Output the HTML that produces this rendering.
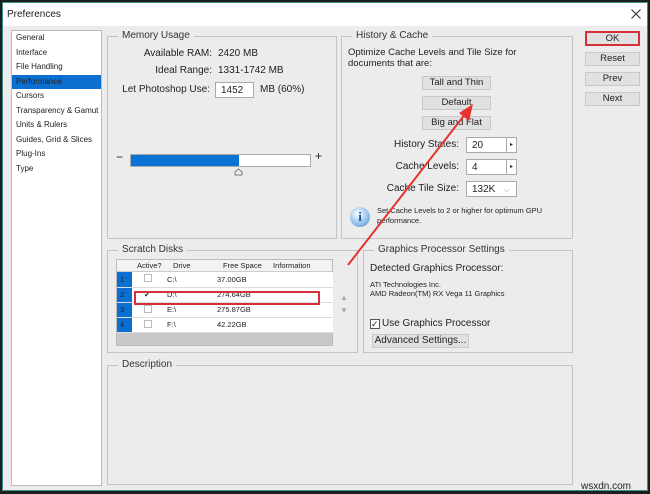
<!DOCTYPE html><html><head><style>
*{margin:0;padding:0;box-sizing:border-box}
body{width:650px;height:494px;background:#1e1e1e;font-family:"Liberation Sans",sans-serif;font-size:9px;color:#222;position:relative;overflow:hidden}
.win{position:absolute;left:2px;top:2px;width:646px;height:489px;background:#ececec;border:1px solid #3a8f86}
.a{position:absolute}
.title{left:0;top:0;width:644px;height:23px;background:#fff}
.grp{position:absolute;border:1px solid #c4c4c4}
.grp>.lg{position:absolute;top:-7px;left:10px;background:#ececec;padding:0 4px;font-size:10px;color:#333}
.btn{position:absolute;background:#e1e1e1;border:1px solid #c8c8c8;text-align:center;font-size:9.5px;line-height:12px}
.inp{position:absolute;background:#fff;border:1px solid #aaa;font-size:10px;padding-left:5px;line-height:15px}
.r{position:absolute;text-align:right;font-size:10px}
.list div{height:14.5px;line-height:14.5px;padding-left:4px;font-size:8px}
td{font-size:7.5px;height:15px;border-bottom:1px solid #ddd}
</style></head><body><div class="win">
<div class="a title"><span class="a" style="left:4px;top:6px;font-size:10px">Preferences</span><svg class="a" style="left:628px;top:6px" width="10" height="10"><path d="M0.5 0.5L9.5 9.5M9.5 0.5L0.5 9.5" stroke="#333" stroke-width="1.1"/></svg></div>
<div class="a list" style="left:8px;top:27px;width:91px;height:456px;background:#fff;border:1px solid #bbb;padding-top:0">
<div>General</div><div>Interface</div><div>File Handling</div><div style="background:#0a6fd0;color:#222">Performance</div><div>Cursors</div><div>Transparency &amp; Gamut</div><div>Units &amp; Rulers</div><div>Guides, Grid &amp; Slices</div><div>Plug-Ins</div><div>Type</div></div>

<div class="grp" style="left:104px;top:33px;width:230px;height:203px"><span class="lg">Memory Usage</span>
<div class="r" style="left:0;width:104px;top:11px">Available RAM:</div><div class="a" style="left:110px;top:11px;font-size:10px">2420 MB</div>
<div class="r" style="left:0;width:104px;top:28px">Ideal Range:</div><div class="a" style="left:110px;top:28px;font-size:10px">1331-1742 MB</div>
<div class="r" style="left:0;width:102px;top:47px">Let Photoshop Use:</div><div class="inp" style="left:107px;top:45px;width:39px;height:16px">1452</div><div class="a" style="left:152px;top:47px;font-size:10px">MB (60%)</div>
<div class="a" style="left:8px;top:113px;font-size:12px">−</div>
<div class="a" style="left:22px;top:117px;width:181px;height:13px;background:#fff;border:1px solid #aaa"><div style="width:108px;height:11px;background:#0a73d4"></div></div>
<div class="a" style="left:207px;top:112px;font-size:12px">+</div>
<svg class="a" style="left:126px;top:131px" width="9" height="8"><path d="M1 7V4L4.5 1 8 4V7Z" fill="#eee" stroke="#777"/></svg>
</div>

<div class="grp" style="left:338px;top:33px;width:232px;height:203px"><span class="lg">History &amp; Cache</span>
<div class="a" style="left:6px;top:10px;font-size:9.5px;line-height:11px">Optimize Cache Levels and Tile Size for<br>documents that are:</div>
<div class="btn" style="left:80px;top:39px;width:69px;height:14px">Tall and Thin</div>
<div class="btn" style="left:80px;top:59px;width:69px;height:14px">Default</div>
<div class="btn" style="left:80px;top:79px;width:69px;height:14px">Big and Flat</div>
<div class="r" style="left:0;width:117px;top:102px">History States:</div><div class="inp" style="left:124px;top:100px;width:41px;height:16px">20</div><div class="a" style="left:164px;top:100px;width:11px;height:16px;background:#fff;border:1px solid #aaa;font-size:6px;text-align:center;line-height:15px">▸</div>
<div class="r" style="left:0;width:117px;top:124px">Cache Levels:</div><div class="inp" style="left:124px;top:122px;width:41px;height:16px">4</div><div class="a" style="left:164px;top:122px;width:11px;height:16px;background:#fff;border:1px solid #aaa;font-size:6px;text-align:center;line-height:15px">▸</div>
<div class="r" style="left:0;width:117px;top:146px">Cache Tile Size:</div><div class="inp" style="left:124px;top:144px;width:51px;height:16px">132K <span style="color:#777;font-size:7px;margin-left:6px">⌵</span></div>
<div class="a" style="left:8px;top:170px;width:20px;height:20px;border-radius:50%;background:radial-gradient(circle at 40% 35%,#fff,#8cbde8 60%,#3b7fc4);color:#1a4f9a;font:bold 13px 'Liberation Serif',serif;text-align:center;line-height:20px">i</div>
<div class="a" style="left:35px;top:169px;font-size:7.5px;line-height:10px">Set Cache Levels to 2 or higher for optimum GPU<br>performance.</div>
</div>

<div class="btn" style="left:582px;top:28px;width:55px;height:15px;border:2px solid #d6303a;line-height:11px">OK</div>
<div class="btn" style="left:582px;top:49px;width:55px;height:14px">Reset</div>
<div class="btn" style="left:582px;top:69px;width:55px;height:14px">Prev</div>
<div class="btn" style="left:582px;top:89px;width:55px;height:14px">Next</div>

<div class="grp" style="left:104px;top:247px;width:251px;height:103px"><span class="lg">Scratch Disks</span>
<div class="a" style="left:8px;top:8px;width:217px;height:87px;background:#c8c8c8;border:1px solid #bbb">
<div style="height:12px;background:#f3f3f3;border-bottom:1px solid #ccc;position:relative;font-size:7.5px;line-height:12px">
<span class="a" style="left:20px">Active?</span><span class="a" style="left:56px">Drive</span><span class="a" style="left:106px">Free Space</span><span class="a" style="left:156px">Information</span></div>
<table style="border-collapse:collapse;width:216px;background:#fff">
<tr><td style="width:15px;background:#0a6fd0;padding-left:3px">1</td><td style="width:35px"><span style="display:inline-block;width:8px;height:8px;border:1px solid #bbb;margin-left:12px"></span></td><td style="width:50px">C:\</td><td>37.00GB</td></tr>
<tr><td style="background:#0a6fd0;padding-left:3px">2</td><td><span style="margin-left:12px">✔</span></td><td>D:\</td><td>274.64GB</td></tr>
<tr><td style="background:#0a6fd0;padding-left:3px">3</td><td><span style="display:inline-block;width:8px;height:8px;border:1px solid #bbb;margin-left:12px"></span></td><td>E:\</td><td>275.87GB</td></tr>
<tr><td style="background:#0a6fd0;padding-left:3px">4</td><td><span style="display:inline-block;width:8px;height:8px;border:1px solid #bbb;margin-left:12px"></span></td><td>F:\</td><td>42.22GB</td></tr>
</table></div>
<div class="a" style="left:26px;top:40px;width:186px;height:14px;border:2px solid #d6303a"></div>
<div class="a" style="left:232px;top:40px;color:#aaa;font-size:8px;line-height:13px">▲<br>▼</div>
</div>

<div class="grp" style="left:360px;top:247px;width:210px;height:103px"><span class="lg">Graphics Processor Settings</span>
<div class="a" style="left:6px;top:12px;font-size:10px">Detected Graphics Processor:</div>
<div class="a" style="left:6px;top:29px;font-size:7.5px;line-height:9px">ATI Technologies Inc.<br>AMD Radeon(TM) RX Vega 11 Graphics</div>
<div class="a" style="left:6px;top:68px;width:10px;height:10px;border:1px solid #555;background:#fff;font-size:9px;line-height:9px">✓</div>
<div class="a" style="left:18px;top:67px;font-size:10px">Use Graphics Processor</div>
<div class="btn" style="left:8px;top:83px;width:97px;height:14px;font-size:10px">Advanced Settings...</div>
</div>

<div class="grp" style="left:104px;top:362px;width:466px;height:120px"><span class="lg">Description</span></div>
<div class="a" style="left:578px;top:478px;font-size:10px;color:#222">wsxdn.com</div>
</div>
<svg class="a" style="left:0;top:0" width="650" height="494"><line x1="348" y1="265" x2="466" y2="113" stroke="#e8322e" stroke-width="2"/><path d="M473 104 L469 121 L459 113Z" fill="#e8322e"/></svg>
</body></html>
